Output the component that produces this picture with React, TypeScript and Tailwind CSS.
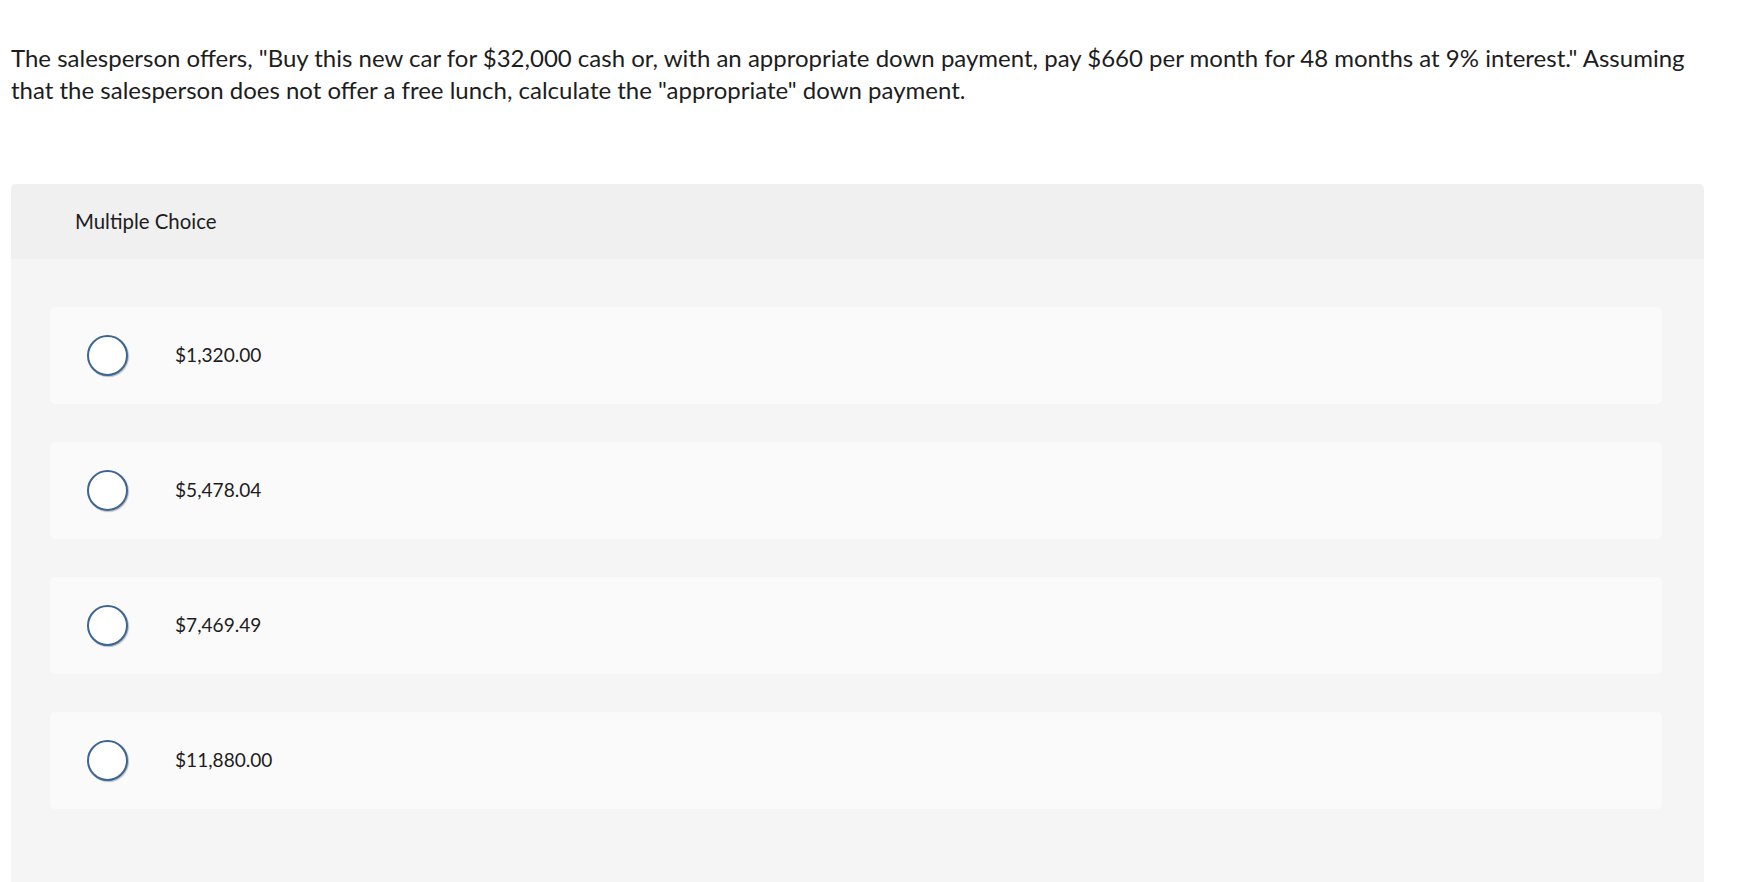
import React from "react";

const options = ["$1,320.00", "$5,478.04", "$7,469.49", "$11,880.00"];

export default function App() {
  return (
    <div className="min-h-screen bg-white text-[#1d1d1d]" style={{ fontFamily: "Lato, 'Open Sans', sans-serif" }}>
      <div className="w-[1711px] pl-[11px] pt-[42px] text-[24px] leading-[32px]">
        The salesperson offers, "Buy this new car for $32,000 cash or, with an appropriate down payment, pay $660 per month for 48 months at 9% interest." Assuming that the salesperson does not offer a free lunch, calculate the "appropriate" down payment.
      </div>
      <div className="ml-[11px] mt-[78px] w-[1693px] overflow-hidden rounded-t-[5px]">
        <div className="flex h-[75px] items-center bg-[#f0f0f0] pl-[64px] text-[20.4px]">
          Multiple Choice
        </div>
        <div className="flex flex-col gap-[38px] bg-[#f5f5f5] pb-[80px] pl-[39px] pr-[42px] pt-[48px]">
          {options.map((o) => (
            <div key={o} className="flex h-[97px] items-center rounded-[5px] bg-[#fafafa] pl-[37px]">
              <div className="h-[41px] w-[41px] rounded-full border-2 border-[#3a6596] bg-white shadow-[1px_1px_1px_rgba(0,0,0,0.25)]" />
              <span className="ml-[47px] text-[19.1px]">{o}</span>
            </div>
          ))}
        </div>
      </div>
    </div>
  );
}
